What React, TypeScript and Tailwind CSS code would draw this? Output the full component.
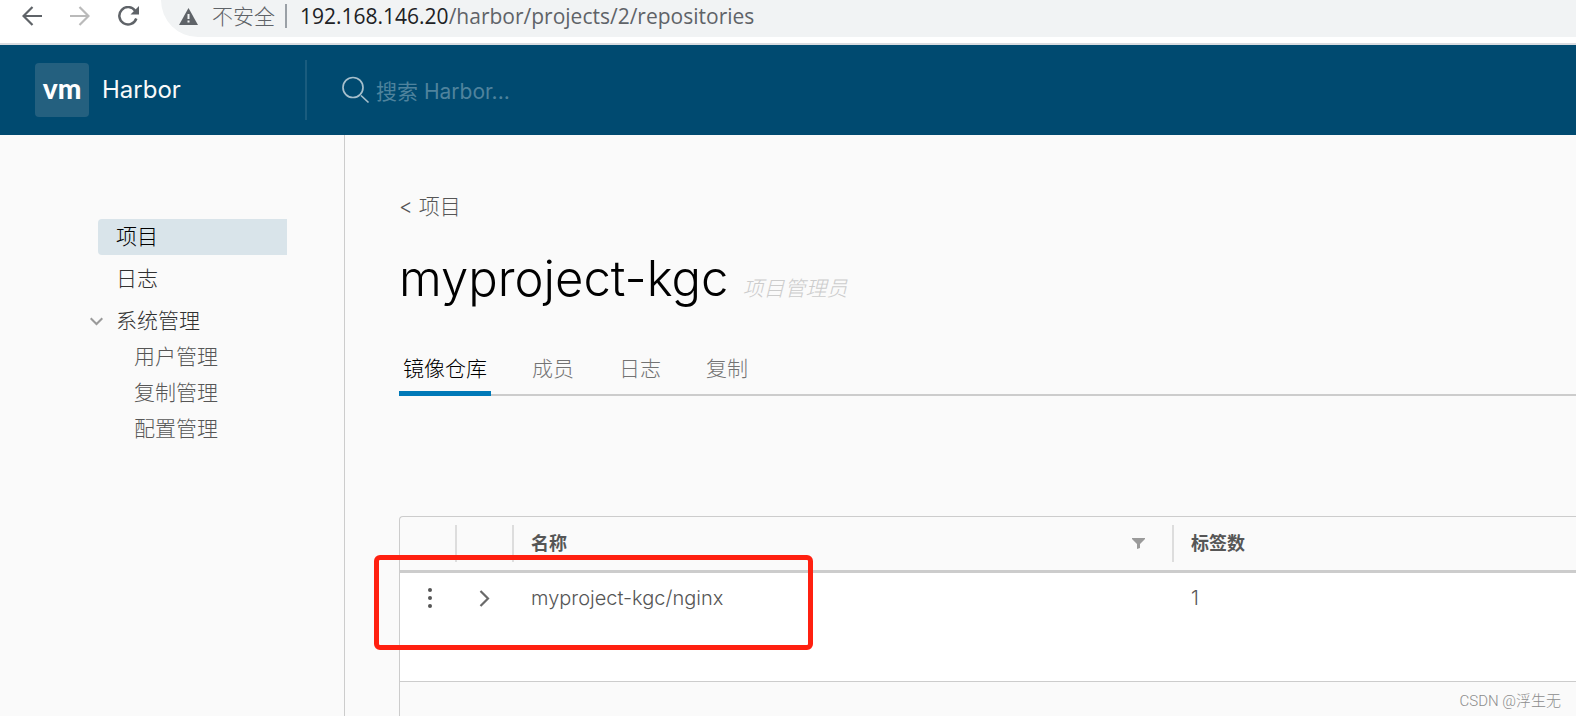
import React, { useState } from 'react';
import clsx from 'clsx';

const adminItems = ['用户管理', '复制管理', '配置管理'];
const tabs = ['镜像仓库', '成员', '日志', '复制'];
const repositories = [{ name: 'myproject-kgc/nginx', tags: 1 }];

function BrowserBar() {
  return (
    <div className="flex h-[45px] items-start border-b-2 border-[#dadce0] bg-white font-['Open_Sans','Noto_Sans_CJK_SC',sans-serif]">
      <div className="flex h-8 shrink-0 items-center gap-7 pl-[22px] pr-[22px] text-[#5f6368]">
        <button aria-label="Back">
          <svg width="20" height="20" viewBox="0 0 20 20" fill="none" stroke="currentColor" strokeWidth="2.2">
            <path d="M20 10H1.5M10.5 1L1.5 10l9 9" />
          </svg>
        </button>
        <button aria-label="Forward" className="text-[#bababa]">
          <svg width="20" height="20" viewBox="0 0 20 20" fill="none" stroke="currentColor" strokeWidth="2.2">
            <path d="M0 10h18.5M9.5 1l9 9-9 9" />
          </svg>
        </button>
        <button aria-label="Reload">
          <svg width="21" height="20" viewBox="0 0 21 20" fill="none">
            <path d="M17.3 5A8.700 8.700 0 1 0 18.300 12.500" stroke="currentColor" strokeWidth="2.5" />
            <path d="M21 0v8.500h-8.500z" fill="currentColor" />
          </svg>
        </button>
      </div>
      <div className="flex h-[37px] flex-1 items-center rounded-bl-full bg-[#f1f3f4] pb-[5px] pl-[18px] text-[21px] leading-8">
        <svg width="19" height="17" viewBox="0 0 19 17" className="shrink-0">
          <path d="M9.5 0L19 17H0z" fill="#5f6368" />
          <path d="M8.500 6h2v5h-2zM8.500 12.500h2v2h-2z" fill="#f1f3f4" />
        </svg>
        <span className="ml-[14px] text-[#5f6368]">不安全</span>
        <span className="ml-[10px] h-6 w-[2px] bg-[#9aa0a6]" />
        <span className="ml-[13px] whitespace-nowrap font-normal text-[#202124]">
          192.168.146.20<span className="text-[#5f6368]">/harbor/projects/2/repositories</span>
        </span>
      </div>
    </div>
  );
}

function Header() {
  return (
    <header className="flex h-[90px] items-center bg-[#004a70]">
      <a href="#" className="flex w-[305px] shrink-0 items-center gap-[13px] pl-[35px] text-[#fafafa]">
        <span className="flex h-[54px] w-[54px] items-center justify-center rounded bg-[#24607f] pb-1 font-['Lato'] text-[28px] font-black leading-8 text-white">
          vm
        </span>
        <span className="text-2xl font-normal">Harbor</span>
      </a>
      <span className="h-[60px] w-[2px] shrink-0 bg-[#1a5c7e]" />
      <label className="flex flex-1 items-center gap-[6px] pl-[35px] text-[#a6bfcc]">
        <svg width="28" height="28" viewBox="0 0 28 28" fill="none" stroke="currentColor" strokeWidth="1.700" aria-hidden="true">
          <circle cx="11" cy="11.500" r="10" />
          <path d="M19 19.500l7.500 7" />
        </svg>
        <input
          type="text"
          aria-label="搜索 Harbor"
          placeholder="搜索 Harbor..."
          className="mt-1 flex-1 bg-transparent text-[21px] font-normal leading-8 outline-none placeholder:text-[#4f839d]"
        />
      </label>
    </header>
  );
}

function Sidebar() {
  const [open, setOpen] = useState(true);

  return (
    <nav className="w-[345px] shrink-0 border-r border-[#ccc] pt-[84px] text-[21px] leading-9 text-[#313131]">
      <a href="#" className="ml-[98px] mr-[57px] block rounded-l bg-[#d9e4ea] pl-[18px] text-black">
        项目
      </a>
      <a href="#" className="ml-[98px] mt-[6px] block pl-[18px]">
        日志
      </a>
      <button onClick={() => setOpen(!open)} className="ml-[90px] mt-[6px] flex items-center gap-[13px]">
        <svg
          width="13"
          height="9"
          viewBox="0 0 13 9"
          fill="none"
          stroke="#9a9a9a"
          strokeWidth="2"
          className={clsx(!open && '-rotate-90')}
        >
          <path d="M.7 1.200l5.800 5.800 5.800-5.800" />
        </svg>
        系统管理
      </button>
      {open && (
        <div className="ml-[134px] text-[#565656]">
          {adminItems.map((item) => (
            <a key={item} href="#" className="block">
              {item}
            </a>
          ))}
        </div>
      )}
    </nav>
  );
}

function RepositoryTable() {
  return (
    <div className="relative mt-[120px]">
      <table className="w-full table-fixed border-separate border-spacing-0 rounded-tl border-l border-t border-[#ccc] text-left text-[#565656]">
        <colgroup>
          <col className="w-[57px]" />
          <col className="w-[57px]" />
          <col className="w-[660px]" />
          <col />
        </colgroup>
        <thead className="text-lg leading-[37px]">
          <tr>
            <th aria-label="操作" className="border-b-3 border-[#ccc] py-2">
              <div className="h-[37px] border-r-2 border-[#ddd]" />
            </th>
            <th aria-label="展开" className="border-b-3 border-[#ccc] py-2">
              <div className="h-[37px] border-r-2 border-[#ddd]" />
            </th>
            <th className="border-b-3 border-[#ccc] py-2">
              <div className="flex h-[37px] items-center justify-between border-r-2 border-[#ddd] pl-[17px] pr-[27px]">
                名称
                <button aria-label="筛选">
                  <svg width="13" height="11" viewBox="0 0 13 11" fill="#9a9a9a">
                    <path d="M0 0h13v1L8 6v4l-3 1V6L0 1z" />
                  </svg>
                </button>
              </div>
            </th>
            <th className="border-b-3 border-[#ccc] px-[17px] py-2">标签数</th>
          </tr>
        </thead>
        <tbody className="bg-white text-[20px] leading-[50px]">
          {repositories.map((repo) => (
            <tr key={repo.name} className="h-[109px] align-top">
              <td className="border-b border-[#ccc]">
                <button aria-label="操作" className="flex h-[50px] w-full items-center justify-center pl-[2px]">
                  <svg width="4" height="20" viewBox="0 0 4 20" fill="#565656">
                    <circle cx="2" cy="2" r="2" />
                    <circle cx="2" cy="10" r="2" />
                    <circle cx="2" cy="18" r="2" />
                  </svg>
                </button>
              </td>
              <td className="border-b border-[#ccc]">
                <button aria-label="展开" className="flex h-[50px] w-full items-center justify-center pr-[2px]">
                  <svg width="11" height="17" viewBox="0 0 11 17" fill="none" stroke="#6a6a6a" strokeWidth="2.200">
                    <path d="M1.500 1l7.500 7.500L1.500 16" />
                  </svg>
                </button>
              </td>
              <td className="border-b border-[#ccc] px-[17px]">{repo.name}</td>
              <td className="border-b border-[#ccc] px-[17px]">{repo.tags}</td>
            </tr>
          ))}
        </tbody>
        <tfoot>
          <tr>
            <td
              colSpan={4}
              className="h-[34px] pr-[15px] pt-1 text-right font-['Roboto','Noto_Sans_CJK_SC',sans-serif] text-[15px] leading-6 text-[#8c8c8c]"
            >
              CSDN @浮生无
            </td>
          </tr>
        </tfoot>
      </table>
      <div className="pointer-events-none absolute -left-[25px] top-[39px] h-[95px] w-[439px] rounded-md border-[5px] border-[#ff2010]" />
    </div>
  );
}

export default function App() {
  const [activeTab, setActiveTab] = useState('镜像仓库');

  return (
    <div className="flex h-screen flex-col overflow-hidden bg-[#fafafa] font-['Inter','Noto_Sans_CJK_SC',sans-serif] font-light">
      <BrowserBar />
      <Header />
      <div className="flex min-h-0 flex-1">
        <Sidebar />
        <main className="min-w-0 flex-1 pl-[54px] pt-[54px]">
          <a href="#" className="block text-[21px] leading-9 text-[#565656]">
            &lt; 项目
          </a>
          <div className="mt-[24px] flex items-baseline gap-[14px] leading-[60px]">
            <h1 className="text-[49px] leading-[60px] text-black">myproject-kgc</h1>
            <span className="text-[21px] italic text-[#ccc]">项目管理员</span>
          </div>
          <div role="tablist" className="mt-[25px] flex h-[52px] gap-[37px] border-b-2 border-[#ccc] text-[21px] leading-[50px] text-[#737373]">
            {tabs.map((tab) => (
              <button
                key={tab}
                role="tab"
                aria-selected={tab === activeTab}
                onClick={() => setActiveTab(tab)}
                className={clsx(
                  'h-[52px] border-b-5 px-1',
                  tab === activeTab ? 'border-[#0079b8] text-black' : 'border-transparent'
                )}
              >
                {tab}
              </button>
            ))}
          </div>
          <RepositoryTable />
        </main>
      </div>
    </div>
  );
}
